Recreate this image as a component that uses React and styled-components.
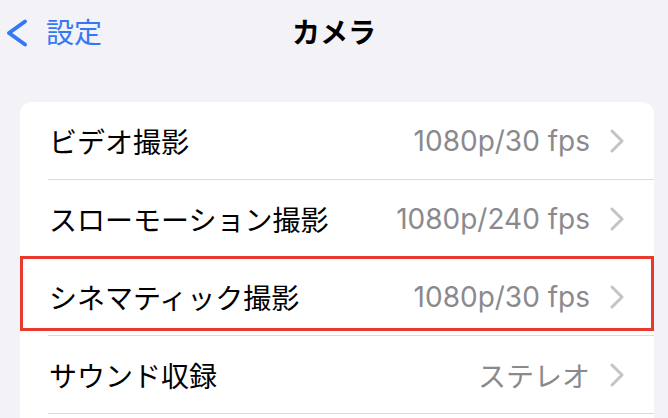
import React from "react";
import styled, { createGlobalStyle } from "styled-components";

const GlobalStyle = createGlobalStyle`
  html, body {
    margin: 0;
    padding: 0;
    background: #f2f2f7;
  }
  body {
    font-family: "Inter", "Noto Sans CJK JP", sans-serif;
    -webkit-font-smoothing: antialiased;
  }
`;

const Page = styled.div`
  width: 668px;
  height: 418px;
  overflow: hidden;
  background: #f2f2f7;
`;

const NavBar = styled.div`
  display: grid;
  grid-template-columns: 1fr auto 1fr;
  align-items: center;
  height: 66px;
`;

const BackButton = styled.div`
  display: flex;
  align-items: center;
  gap: 16px;
  padding-left: 6px;
  color: #3478f6;
  font-size: 28px;
  line-height: 1;
  svg {
    display: block;
  }
`;

const Title = styled.div`
  font-size: 28px;
  font-weight: 600;
  color: #000;
  line-height: 1;
`;

const Card = styled.div`
  margin: 36px 14px 0 20px;
  padding-bottom: 40px;
  background: #fff;
  border-radius: 12px;
`;

const Row = styled.div`
  position: relative;
  display: flex;
  align-items: center;
  height: 78px;
  padding: 0 30px 0 29px;
  &::after {
    content: "";
    position: absolute;
    left: 28px;
    right: 0;
    bottom: 0;
    height: 1px;
    background: #dcdce0;
  }
  &::before {
    content: "";
    display: ${(p) => (p.$highlighted ? "block" : "none")};
    position: absolute;
    z-index: 2;
    left: 0;
    right: 0;
    top: -2px;
    height: 75px;
    box-sizing: border-box;
    border: 3.5px solid #e8392c;
  }
`;

const Label = styled.div`
  flex: 1;
  font-size: 28px;
  color: #000;
  white-space: nowrap;
`;

const Value = styled.div`
  font-size: 28px;
  color: #8a8a8e;
  white-space: nowrap;
  margin-right: 20px;
`;

const Chevron = () => (
  <svg width="14" height="24" viewBox="0 0 14 24">
    <polyline
      points="2,2 12,12 2,22"
      fill="none"
      stroke="#c4c4c7"
      strokeWidth="3"
      strokeLinecap="round"
      strokeLinejoin="round"
    />
  </svg>
);

const BackChevron = () => (
  <svg width="24" height="32" viewBox="0 0 24 32">
    <polyline
      points="19,4.5 3,16 19,27.5"
      fill="none"
      stroke="#3478f6"
      strokeWidth="4"
      strokeLinecap="round"
      strokeLinejoin="round"
    />
  </svg>
);

const rows = [
  { label: "ビデオ撮影", value: "1080p/30 fps" },
  { label: "スローモーション撮影", value: "1080p/240 fps" },
  { label: "シネマティック撮影", value: "1080p/30 fps", highlighted: true },
  { label: "サウンド収録", value: "ステレオ" },
];

const App = () => {
  return (
    <Page>
      <GlobalStyle />
      <NavBar>
        <BackButton>
          <BackChevron />
          <span>設定</span>
        </BackButton>
        <Title>カメラ</Title>
        <div />
      </NavBar>
      <Card>
        {rows.map((r) => (
          <Row key={r.label} $highlighted={r.highlighted}>
            <Label>{r.label}</Label>
            <Value>{r.value}</Value>
            <Chevron />
          </Row>
        ))}
      </Card>
    </Page>
  );
};

export default App;
